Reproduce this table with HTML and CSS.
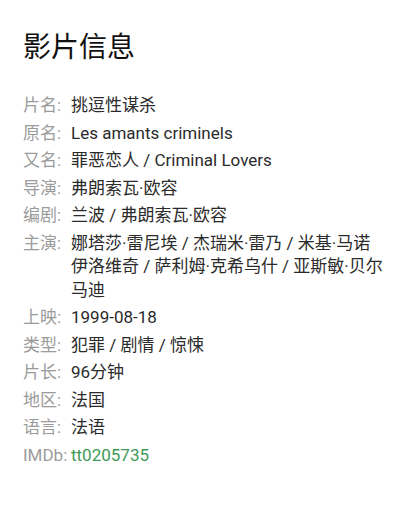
FILE: index.html
```html
<!DOCTYPE html>
<html lang="zh-CN">
<head>
<meta charset="utf-8">
<link rel="stylesheet" href="styles.css">
</head>
<body>
<div class="page">
  <h1 class="title">影片信息</h1>
  <div class="info">
    <div class="row"><span class="label">片名:</span><span class="value">挑逗性谋杀</span></div>
    <div class="row"><span class="label">原名:</span><span class="value">Les amants criminels</span></div>
    <div class="row"><span class="label">又名:</span><span class="value">罪恶恋人 / Criminal Lovers</span></div>
    <div class="row"><span class="label">导演:</span><span class="value">弗朗索瓦·欧容</span></div>
    <div class="row"><span class="label">编剧:</span><span class="value">兰波 / 弗朗索瓦·欧容</span></div>
    <div class="row"><span class="label">主演:</span><span class="value">娜塔莎·雷尼埃 / 杰瑞米·雷乃 / 米基·马诺伊洛维奇 / 萨利姆·克希乌什 / 亚斯敏·贝尔马迪</span></div>
    <div class="row"><span class="label">上映:</span><span class="value">1999-08-18</span></div>
    <div class="row"><span class="label">类型:</span><span class="value">犯罪 / 剧情 / 惊悚</span></div>
    <div class="row"><span class="label">片长:</span><span class="value">96分钟</span></div>
    <div class="row"><span class="label">地区:</span><span class="value">法国</span></div>
    <div class="row"><span class="label">语言:</span><span class="value">法语</span></div>
    <div class="row"><span class="label">IMDb:</span><span class="value link">tt0205735</span></div>
  </div>
</div>
</body>
</html>
```

FILE: styles.css
```css
html, body {
  margin: 0;
  padding: 0;
  background: #ffffff;
}
body {
  font-family: Roboto, "Noto Sans CJK SC", sans-serif;
}
.page {
  padding: 28px 22px 20px 23px;
}
.title {
  margin: 0 0 26px 0;
  font-size: 28px;
  font-weight: 400;
  color: #111111;
  line-height: 40px;
}
.info {
  display: flex;
  flex-direction: column;
  gap: 4px;
}
.row {
  display: flex;
  font-size: 17px;
  line-height: 23.5px;
}
.label {
  flex: none;
  width: 48px;
  color: #9b9b9b;
  white-space: nowrap;
}
.value {
  flex: 1;
  color: #2b2b2b;
}
.link {
  color: #3d9a56;
}
```
